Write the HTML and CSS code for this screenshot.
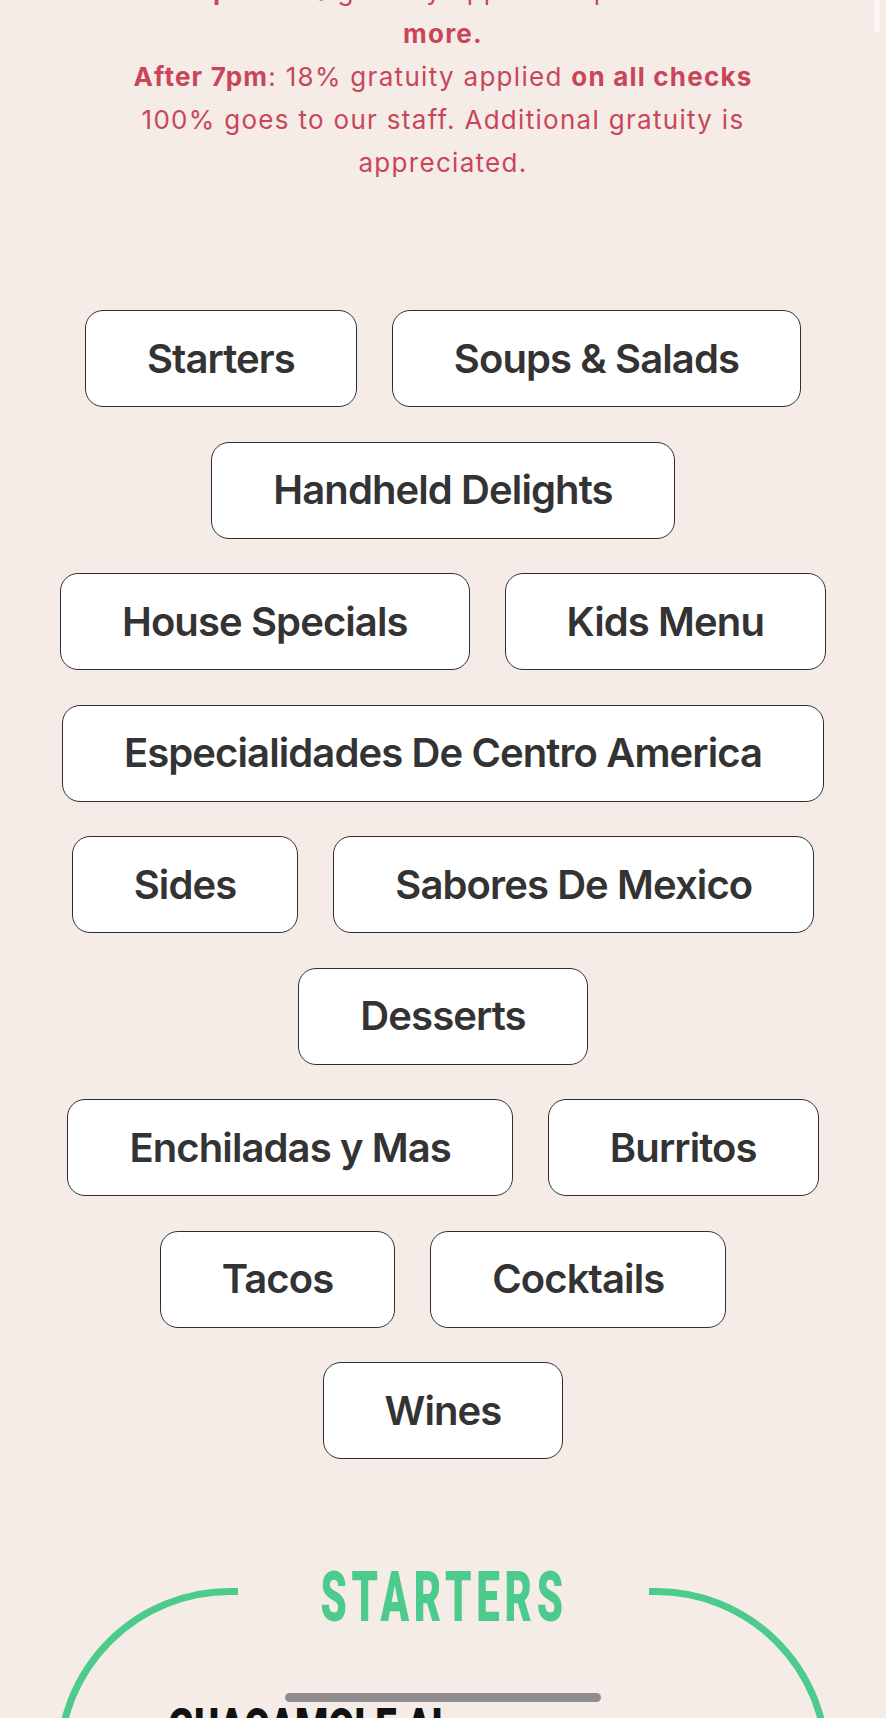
FILE: index.html
```html
<!DOCTYPE html>
<html lang="en">
<head>
<meta charset="utf-8">
<title>Menu</title>
<link rel="stylesheet" href="styles.css">
</head>
<body>
  <p class="notice"><b>Before 7pm</b>: 18% gratuity applied to parties of 6 or<br><b>more.</b><br><b>After 7pm</b>: 18% gratuity applied <b>on all checks</b><br>100% goes to our staff. Additional gratuity is<br>appreciated.</p>

  <nav class="categories">
    <div class="cat-row">
      <a class="cat">Starters</a>
      <a class="cat">Soups &amp; Salads</a>
    </div>
    <div class="cat-row">
      <a class="cat">Handheld Delights</a>
    </div>
    <div class="cat-row">
      <a class="cat">House Specials</a>
      <a class="cat">Kids Menu</a>
    </div>
    <div class="cat-row">
      <a class="cat">Especialidades De Centro America</a>
    </div>
    <div class="cat-row">
      <a class="cat">Sides</a>
      <a class="cat">Sabores De Mexico</a>
    </div>
    <div class="cat-row">
      <a class="cat">Desserts</a>
    </div>
    <div class="cat-row">
      <a class="cat">Enchiladas y Mas</a>
      <a class="cat">Burritos</a>
    </div>
    <div class="cat-row">
      <a class="cat">Tacos</a>
      <a class="cat">Cocktails</a>
    </div>
    <div class="cat-row">
      <a class="cat">Wines</a>
    </div>
  </nav>

  <fieldset class="section">
    <legend class="section-title"><span class="section-title-text">STARTERS</span></legend>
    <div class="dish">
      <h3 class="dish-name"><span class="dish-name-text">GUACAMOLE AL</span><br><span class="dish-name-text">MOLCAJETE</span></h3>
    </div>
  </fieldset>

  <div class="home-indicator"></div>
  <div class="scroll-thumb"></div>
</body>
</html>
```
FILE: styles.css
```css
* {
  box-sizing: border-box;
}

body {
  margin: 0;
  background: #f6ece7;
  font-family: Inter, "Noto Sans", sans-serif;
  overflow-x: hidden;
}

.notice {
  margin: -31px 0 0;
  text-align: center;
  font-size: 26px;
  letter-spacing: 1.3px;
  line-height: 43px;
  color: #c9465a;
}

.notice b {
  font-weight: 700;
  letter-spacing: 1.2px;
}

.categories {
  display: flex;
  flex-direction: column;
  gap: 34.5px;
  margin: 126px 0 0;
}

.cat-row {
  display: flex;
  justify-content: center;
  gap: 35px;
}

.cat {
  display: flex;
  align-items: center;
  height: 97px;
  padding: 0 61px;
  border: 1.5px solid #2f2f2f;
  border-radius: 18px;
  background: #ffffff;
  color: #333333;
  font-family: Inter, sans-serif;
  font-weight: 600;
  font-size: 40px;
  letter-spacing: -0.9px;
  line-height: 1;
  white-space: nowrap;
}

.section {
  margin: 92px 56px 0;
  padding: 71px 0 200px;
  border: 7px solid #4ccb8c;
  border-radius: 174px;
  min-height: 600px;
}

.section-title {
  width: 411px;
  margin: 0 auto;
  padding: 12px 0 0;
  text-align: center;
  line-height: 68px;
  height: 80px;
}

.section-title-text {
  display: inline-block;
  font-family: Roboto, sans-serif;
  font-weight: 900;
  font-size: 70px;
  letter-spacing: 8px;
  color: #4ccb8c;
  transform: scaleX(0.6);
  transform-origin: center;
}

.dish {
  padding: 0 40px 0 105px;
}

.dish-name {
  margin: 0;
  font-family: Roboto, sans-serif;
  font-weight: 900;
  font-size: 50px;
  line-height: 50px;
  color: #111111;
}

.dish-name-text {
  display: inline-block;
  transform: scaleX(0.76);
  transform-origin: left;
  white-space: nowrap;
}

.home-indicator {
  position: fixed;
  left: 50%;
  bottom: 16px;
  width: 316px;
  height: 9px;
  margin-left: -158px;
  border-radius: 5px;
  background: #8f8d90;
}

.scroll-thumb {
  position: fixed;
  top: 0;
  right: 6px;
  width: 6px;
  height: 32px;
  border-radius: 3px;
  background: #fbf6f4;
}
```
